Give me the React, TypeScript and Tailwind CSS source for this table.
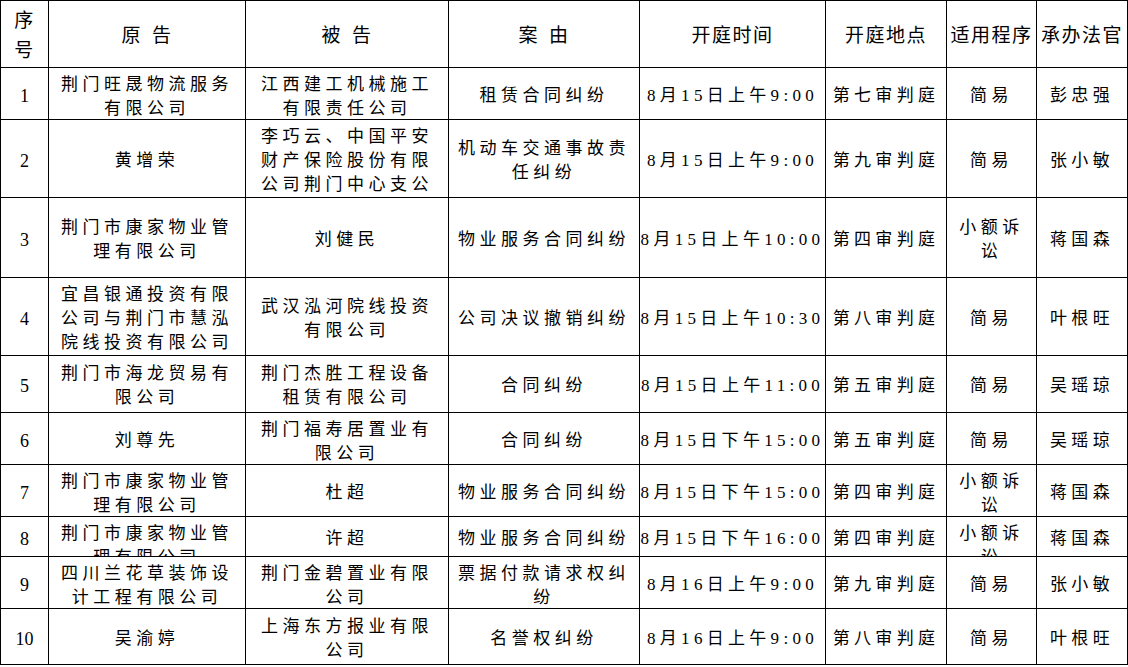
const rows = [
  ["1", "荆门旺晟物流服务有限公司", "江西建工机械施工有限责任公司", "租赁合同纠纷", "8月15日上午9:00", "第七审判庭", "简易", "彭忠强"],
  ["2", "黄增荣", "李巧云、中国平安财产保险股份有限公司荆门中心支公司", "机动车交通事故责任纠纷", "8月15日上午9:00", "第九审判庭", "简易", "张小敏"],
  ["3", "荆门市康家物业管理有限公司", "刘健民", "物业服务合同纠纷", "8月15日上午10:00", "第四审判庭", "小额诉讼", "蒋国森"],
  ["4", "宜昌银通投资有限公司与荆门市慧泓院线投资有限公司", "武汉泓河院线投资有限公司", "公司决议撤销纠纷", "8月15日上午10:30", "第八审判庭", "简易", "叶根旺"],
  ["5", "荆门市海龙贸易有限公司", "荆门杰胜工程设备租赁有限公司", "合同纠纷", "8月15日上午11:00", "第五审判庭", "简易", "吴瑶琼"],
  ["6", "刘尊先", "荆门福寿居置业有限公司", "合同纠纷", "8月15日下午15:00", "第五审判庭", "简易", "吴瑶琼"],
  ["7", "荆门市康家物业管理有限公司", "杜超", "物业服务合同纠纷", "8月15日下午15:00", "第四审判庭", "小额诉讼", "蒋国森"],
  ["8", "荆门市康家物业管理有限公司", "许超", "物业服务合同纠纷", "8月15日下午16:00", "第四审判庭", "小额诉讼", "蒋国森"],
  ["9", "四川兰花草装饰设计工程有限公司", "荆门金碧置业有限公司", "票据付款请求权纠纷", "8月16日上午9:00", "第九审判庭", "简易", "张小敏"],
  ["10", "吴渝婷", "上海东方报业有限公司", "名誉权纠纷", "8月16日上午9:00", "第八审判庭", "简易", "叶根旺"],
];

// columns that never wrap: number, time, court room, judge
const noWrap = [true, false, false, false, true, true, false, true];

function Spaced({ a, b }: { a: string; b: string }) {
  return (
    <>
      {a}
      <span className="inline-block w-[10px]" />
      {b}
    </>
  );
}

export default function App() {
  const head = "flex items-center justify-center overflow-hidden bg-white pt-[3px] text-center text-[19px] leading-[30px] tracking-[1.5px] whitespace-nowrap";
  // overflowing cells (row 8, row 2) start at the top like the source sheet
  const cell = "flex justify-center overflow-hidden bg-white px-[6px] pt-[5px] pb-[1px] [align-items:safe_center]";

  return (
    <div className="min-h-screen bg-white font-['Liberation_Serif','Noto_Sans_CJK_SC',serif] text-black">
      <div className="grid w-[1128px] grid-cols-[47px_196px_202px_190px_185px_120px_89px_90px] grid-rows-[66px_51px_77px_79px_77px_56px_51px_51px_39px_51px_55px] gap-px bg-black p-px">
        {/* Header */}
        <div className={head}>
          序<br />号
        </div>
        <div className={head}>
          <Spaced a="原" b="告" />
        </div>
        <div className={head}>
          <Spaced a="被" b="告" />
        </div>
        <div className={head}>
          <Spaced a="案" b="由" />
        </div>
        <div className={head}>开庭时间</div>
        <div className={head}>开庭地点</div>
        <div className={head}>适用程序</div>
        <div className={head}>承办法官</div>

        {/* Body */}
        {rows.map((row, i) =>
          row.map((text, j) => (
            <div key={`${i}-${j}`} className={cell}>
              <div
                className={
                  j === 0
                    ? "text-center text-[18px] leading-[24px] whitespace-nowrap"
                    : noWrap[j]
                    ? "text-center text-[17px] leading-[24px] tracking-[4.3px] whitespace-nowrap"
                    : "text-center text-[17px] leading-[24px] tracking-[4.5px]"
                }
              >
                {text}
              </div>
            </div>
          ))
        )}
      </div>
    </div>
  );
}
